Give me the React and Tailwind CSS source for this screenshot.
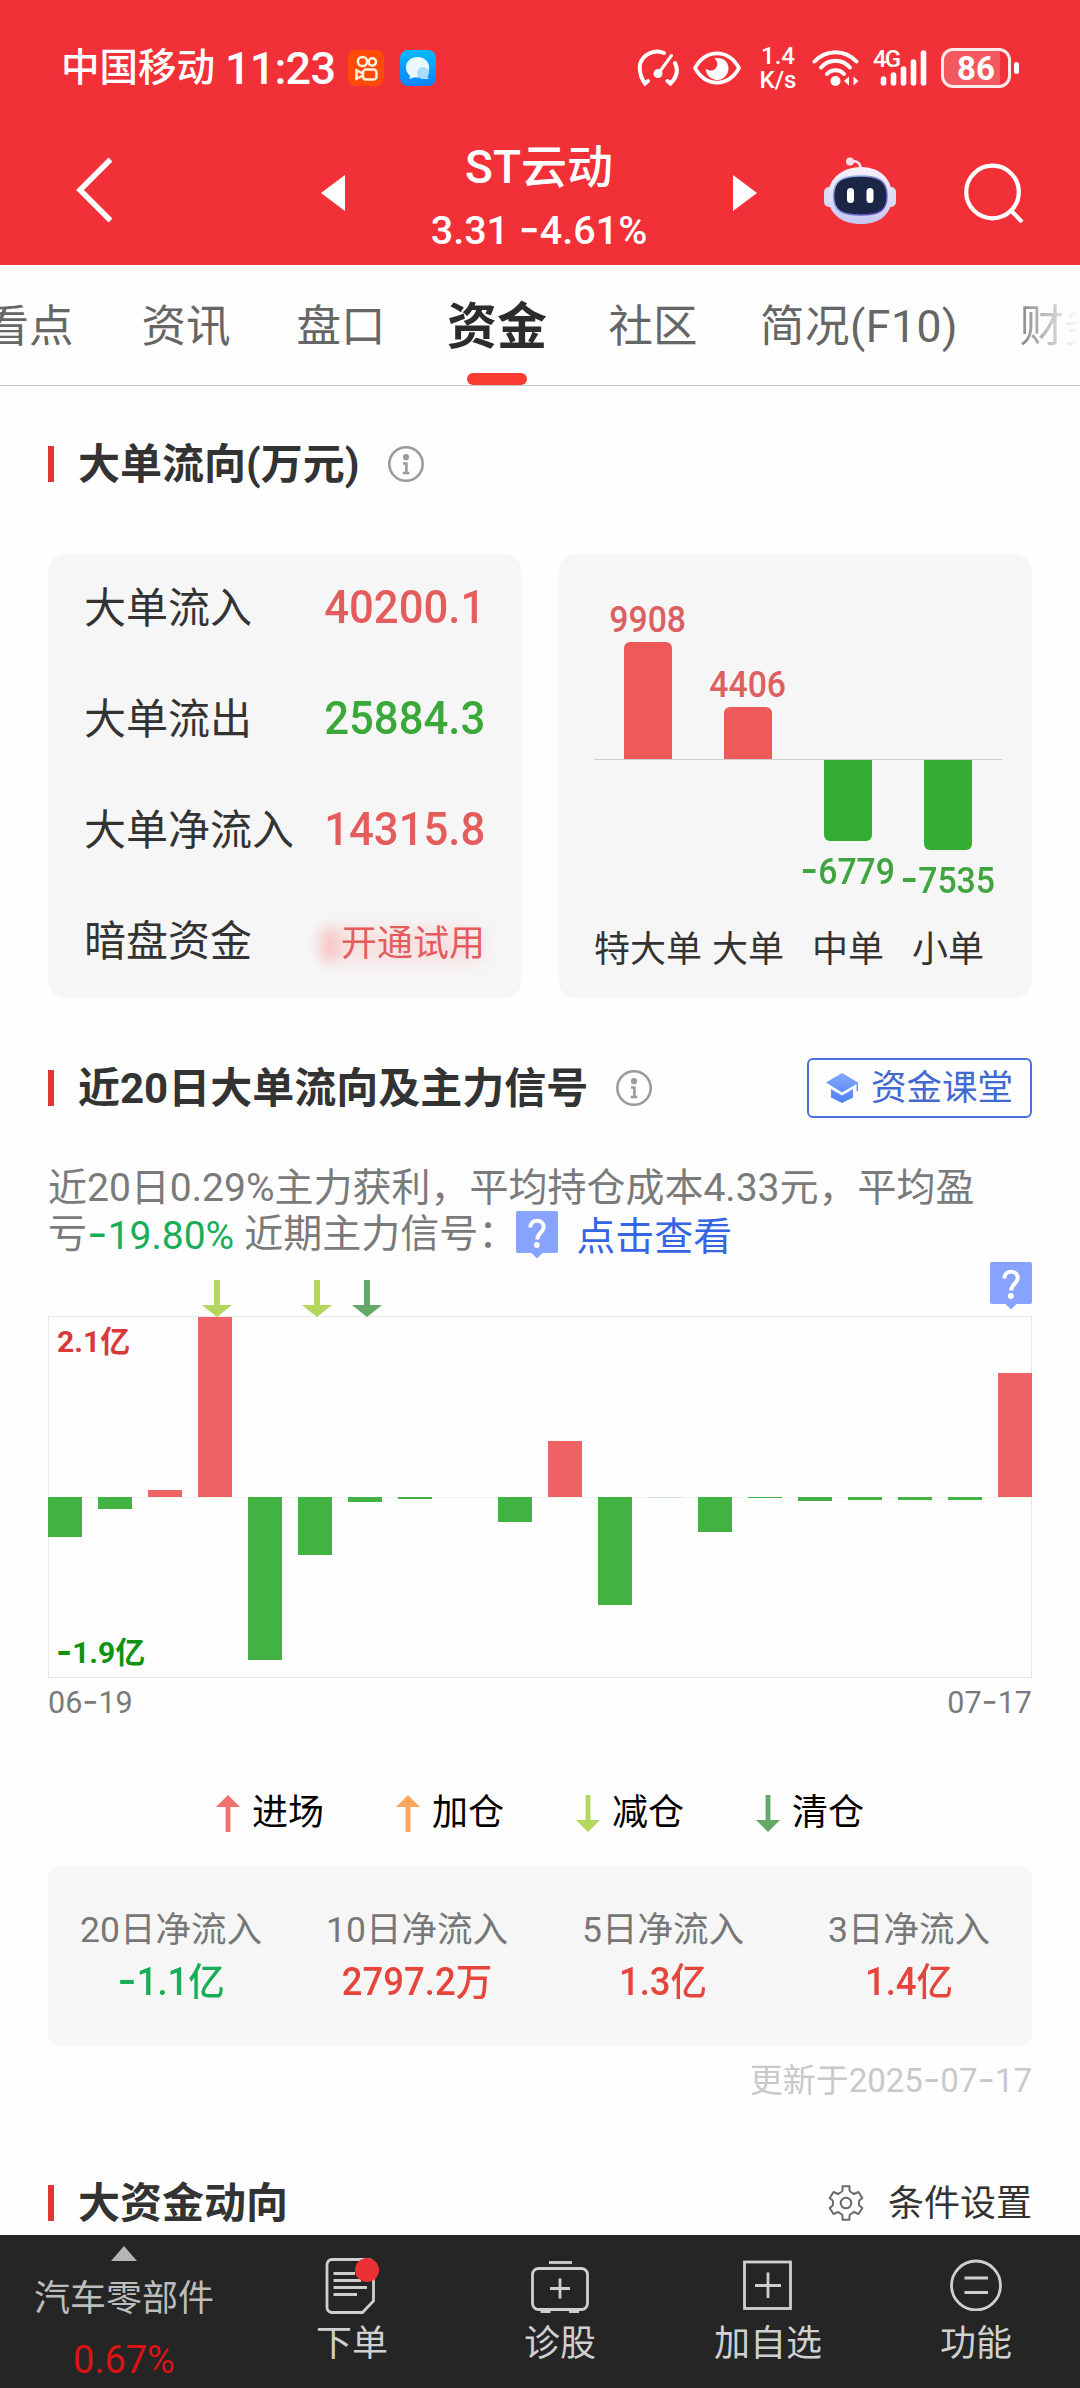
import React from "react";
import clsx from "clsx";

const tabs = [
  { label: "看点", className: "w-[158px]" },
  { label: "资讯", className: "w-[156px]" },
  { label: "盘口", className: "w-[154px]" },
  { label: "资金", className: "w-[158px]", active: true },
  { label: "社区", className: "w-[154px]" },
  { label: "简况(F10)", className: "w-[258px] tracking-[0.5px]" },
  { label: "财务", className: "w-[152px]", faded: true },
];

const flowRows = [
  { label: "大单流入", value: "40200.1", color: "text-[#e55c5c]" },
  { label: "大单流出", value: "25884.3", color: "text-[#3aa93a]" },
  { label: "大单净流入", value: "14315.8", color: "text-[#e55c5c]" },
];

const orderBars = [
  { label: "特大单", value: "9908", height: 117 },
  { label: "大单", value: "4406", height: 52 },
  { label: "中单", value: "-6779", height: 81 },
  { label: "小单", value: "-7535", height: 90 },
];

// bar heights in px, positive above the zero line
const dailyFlow = [
  -40, -12, 7, 180, -163, -58, -5, -2, 0, -25, 56, -108, -0.3, -35, -1, -4, -3,
  -3, -3, 124,
];

const legend = [
  { label: "进场", color: "#f0716e", up: true },
  { label: "加仓", color: "#f9a75f", up: true },
  { label: "减仓", color: "#b2d65e" },
  { label: "清仓", color: "#64a867" },
];

const netInflow = [
  { label: "20日净流入", value: "-1.1亿", color: "text-[#19ad58]" },
  { label: "10日净流入", value: "2797.2万", color: "text-[#e5453b]" },
  { label: "5日净流入", value: "1.3亿", color: "text-[#e5453b]" },
  { label: "3日净流入", value: "1.4亿", color: "text-[#e5453b]" },
];

// digits with a wide dash
const Num = ({ children }) =>
  children.split(/(-)/).map((part, i) =>
    part === "-" ? (
      <span key={i} className="font-['Inter'] text-[1.15em] leading-none tracking-normal">
        -
      </span>
    ) : (
      part
    )
  );

const InfoIcon = () => (
  <svg viewBox="0 0 36 36" className="w-9 h-9" fill="none">
    <circle cx="18" cy="18" r="16.7" stroke="#9b9b9b" strokeWidth="2.6" />
    <circle cx="18" cy="11.2" r="3.1" fill="#9b9b9b" />
    <path
      d="M15 17.5h3.4V27M14.8 27h6.6"
      stroke="#9b9b9b"
      strokeWidth="2.6"
    />
  </svg>
);

const SignalArrow = ({ color, up, className }) => (
  <svg
    viewBox="0 0 30 37"
    className={className}
    preserveAspectRatio="none"
    fill={color}
  >
    <path
      d={
        up
          ? "M15 0 30 12H18V37H12V12H0Z"
          : "M12 0h6v25h12L15 37 0 25h12Z"
      }
    />
  </svg>
);

const QuestionBadge = () => (
  <svg viewBox="0 0 42 47" className="w-[42px] h-[47px]" fill="none">
    <path
      d="M2 0H40a2 2 0 0 1 2 2V40a2 2 0 0 1-2 2H26.500l-5.500 5.500L15.500 42H2a2 2 0 0 1-2-2V2a2 2 0 0 1 2-2Z"
      fill="#87a3fd"
    />
    <path
      d="M14.300 16.500c0-4 2.800-6.700 6.700-6.700s6.700 2.600 6.700 6.200c0 5-6.500 6.600-6.500 12.500"
      stroke="#fff"
      strokeWidth="4"
    />
    <circle cx="20.800" cy="34" r="2.900" fill="#fff" />
  </svg>
);

const SectionTitle = ({ children }) => (
  <div className="flex items-center">
    <div className="w-[6px] h-9 bg-[#e03535]" />
    <h2 className="ml-6 pt-[2px] text-[42px] leading-[60px] font-bold text-[#333] whitespace-nowrap">
      {children}
    </h2>
  </div>
);

const StatusBar = () => (
  <div className="flex items-center h-[136px] pl-[61px] text-white">
    <span className="text-[38.500px] leading-none font-medium w-[154px] whitespace-nowrap">
      中国移动
    </span>
    <span className="ml-[10px] w-[113px] text-[45px] leading-none font-medium tracking-[-0.8px] whitespace-nowrap">
      11:23
    </span>
    <svg viewBox="0 0 36 36" className="ml-[10px] w-9 h-9" fill="none">
      <rect width="36" height="36" rx="8" fill="#ff4a0a" />
      <g stroke="#fff3dc" strokeWidth="2.500">
        <circle cx="14.500" cy="11.500" r="4.600" />
        <circle cx="24.300" cy="12" r="3.700" />
        <rect x="15" y="19.500" width="13.500" height="10" rx="3" />
        <path d="M15 23.500 8.500 20.200v8.600L15 25.500" />
      </g>
    </svg>
    <svg viewBox="0 0 36 36" className="ml-4 w-9 h-9" fill="none">
      <defs>
        <linearGradient id="chat" x1="0" y1="0" x2="0" y2="1">
          <stop stopColor="#08b9ff" />
          <stop offset="1" stopColor="#0b84ff" />
        </linearGradient>
      </defs>
      <rect width="36" height="36" rx="8" fill="url(#chat)" />
      <path
        d="M17.500 7C11 7 6 11.500 6 17.500c0 3.500 1.500 6 4 8L9.500 29l5-1.800c8.500 1.600 14.700-3.200 14.700-9.700C29.200 11.500 24 7 17.500 7Z"
        fill="#eaf8ff"
      />
      <path
        d="M28.500 20.500a6 6 0 1 0-5 8.500h5.300l-1.300-2.600c1.500-1.500 1.800-3.900 1-5.900Z"
        fill="#a9dcff"
      />
    </svg>

    <svg
      viewBox="0 0 42 38"
      className="ml-[201px] w-[42px] h-[38px]"
      fill="none"
      stroke="#fff"
      strokeWidth="4"
      strokeLinecap="round"
    >
      <path d="M27 4A18 18 0 0 0 3 15c-1 8 1 14 5 19.500l3-2.500" />
      <path d="M38 14c4 8 1 15-4.500 20.500l-3-2.500" />
      <path d="M21 25 34.500 6.500" strokeWidth="3" />
      <circle cx="21" cy="24.500" r="2.500" fill="#fff" />
    </svg>
    <svg viewBox="0 0 48 34" className="ml-[14px] w-12 h-[34px]" fill="none">
      <path
        d="M2 17C13-2.500 35-2.500 46 17 35 36.500 13 36.500 2 17Z"
        stroke="#fff"
        strokeWidth="3.600"
      />
      <path
        d="M24 7c8 0 11.500 5 11.500 10.500S31 29 24.500 29 13 24 12.500 17.500c3 2.500 7.500 3 10 0S25.500 10 21 7.500Z"
        fill="#fff"
      />
    </svg>
    <div className="ml-[18px] w-[38px] text-center text-[24px] leading-6 font-medium">
      <div>1.4</div>
      <div>K/s</div>
    </div>
    <svg viewBox="0 0 48 38" className="ml-[15px] w-12 h-[38px]" fill="none">
      <g stroke="#fff" strokeWidth="4" strokeLinecap="round">
        <path d="M2.500 12.500C14 0 33 0 44.500 12.500" />
        <path d="M9 18.500c8-9 21-9 29 0" />
        <path d="M15 25c4.500-5 12.500-5 17 0" />
      </g>
      <circle cx="23.500" cy="32" r="5" fill="#fff" />
      <path d="M32 32l5-4.500v9ZM46.500 32 41.500 27.500v9Z" fill="#fff" />
    </svg>
    <div className="relative ml-[13px] w-[55px] h-[38px]">
      <span className="absolute left-0 -top-[1px] text-[24px] leading-[23px] font-medium tracking-[-2px]">
        4G
      </span>
      <svg
        viewBox="0 0 55 38"
        className="w-full h-full"
        stroke="#fff"
        strokeWidth="5.600"
        strokeLinecap="round"
      >
        <path d="M10.500 30v4M20.500 26v8M30.500 20v14M40.500 13v21M50.500 4v30" />
      </svg>
    </div>
    <div className="ml-[13px] flex items-center">
      <div className="flex w-[70px] h-10 border-[3px] border-white/90 rounded-[12px] overflow-hidden">
        <div className="flex w-[56px] justify-center items-center bg-white/20 pl-2 text-[33px] leading-none font-bold">
          86
        </div>
      </div>
      <div className="ml-[3px] w-[5px] h-3 rounded-full bg-white" />
    </div>
  </div>
);

const StockHeader = () => (
  <div className="flex items-start h-[129px] pl-[76px] text-white">
    <svg
      viewBox="0 0 37 66"
      className="mt-[21px] w-[37px] h-[66px]"
      fill="none"
      stroke="#fff"
      strokeWidth="5.500"
    >
      <path d="M34.500 2.500 4 33 34.500 63.500" />
    </svg>
    <svg viewBox="0 0 24 36" className="ml-[208px] mt-[39px] w-6 h-9" fill="#fff">
      <path d="M24 0v36L0 18Z" />
    </svg>
    <div className="mt-[1px] w-[388px] text-center whitespace-nowrap">
      <div className="text-[46px] leading-[60px] font-medium">ST云动</div>
      <div className="mt-[4px] text-[39.500px] leading-[60px] font-medium">
        <Num>3.31 -4.61%</Num>
      </div>
    </div>
    <svg viewBox="0 0 24 36" className="mt-[39px] w-6 h-9" fill="#fff">
      <path d="M0 0v36L24 18Z" />
    </svg>
    <svg
      viewBox="0 0 72 68"
      className="ml-[67px] mt-[21px] w-[72px] h-[68px]"
      fill="none"
    >
      <defs>
        <linearGradient id="head" x1="0" y1="0" x2="0" y2="1">
          <stop stopColor="#f6f1fb" />
          <stop offset="0.6" stopColor="#dcdcf7" />
          <stop offset="1" stopColor="#c3c6f0" />
        </linearGradient>
        <linearGradient id="rim" x1="0" y1="0" x2="1" y2="1">
          <stop stopColor="#9fc8f5" />
          <stop offset="1" stopColor="#5a3fc0" />
        </linearGradient>
      </defs>
      <path
        d="M26 5c6-2 10 0 11 7"
        stroke="#f3e6f2"
        strokeWidth="2.500"
      />
      <circle cx="26" cy="4.500" r="4" fill="#f6dfe8" />
      <rect x="0" y="30" width="11" height="20" rx="5" fill="#d9dcf6" />
      <rect x="61" y="30" width="11" height="20" rx="5" fill="#d9dcf6" />
      <path
        d="M37 10c18 0 31 11 31 29S56 67 37 67 4 57 4 39s15-29 33-29Z"
        fill="url(#head)"
      />
      <path
        d="M36.500 19c17 0 26.500 4 26.500 19.500S55 58 36.500 58 9.500 54 9.500 38.500 19 19 36.500 19Z"
        fill="#1b2546"
        stroke="url(#rim)"
        strokeWidth="1.500"
      />
      <rect x="23" y="31" width="7" height="15" rx="3.500" fill="#fff" />
      <rect x="42.500" y="31" width="7" height="15" rx="3.500" fill="#fff" />
    </svg>
    <svg
      viewBox="0 0 60 60"
      className="ml-[68px] mt-[27px] w-[60px] h-[60px]"
      fill="none"
      stroke="#fff"
      strokeWidth="4.200"
    >
      <circle cx="28.500" cy="29" r="26.300" />
      <path d="M47.500 48 58 59" />
    </svg>
  </div>
);

const TabBar = () => (
  <div className="h-[121px] border-b border-[#c4c6c5] overflow-hidden">
    <div className="flex -ml-[50px] w-[1190px] h-[120px]">
      {tabs.map((tab) => (
        <div
          key={tab.label}
          className={clsx(
            "relative flex-none text-center leading-[124px] whitespace-nowrap",
            tab.className,
            tab.active
              ? "text-[50px] font-bold text-[#2c2c2c]"
              : "text-[44.500px] text-[#666]",
            tab.faded &&
              "bg-linear-to-r from-[#888] from-20% to-white to-60% bg-clip-text text-transparent"
          )}
        >
          {tab.label}
          {tab.active && (
            <div className="absolute bottom-0 left-[49px] w-[60px] h-3 rounded-full bg-[#f93b32]" />
          )}
        </div>
      ))}
    </div>
  </div>
);

const OrderFlow = () => (
  <div className="mt-[42px] flex gap-9">
    <div className="w-[474px] h-[444px] rounded-[18px] bg-[#f6f6f6] pl-[36px] pr-[37px]">
      {flowRows.map((row) => (
        <div
          key={row.label}
          className="flex justify-between h-[111px] whitespace-nowrap"
        >
          <span className="text-[42px] leading-[109px] text-[#333]">
            {row.label}
          </span>
          <span
            className={clsx(
              "text-[47px] leading-[106px] font-medium origin-right scale-x-[.93]",
              row.color
            )}
          >
            {row.value}
          </span>
        </div>
      ))}
      <div className="flex justify-between h-[111px] whitespace-nowrap">
        <span className="text-[42px] leading-[109px] text-[#333]">
          暗盘资金
        </span>
        <span className="relative text-[36px] leading-[115px] text-[#e55c5c]">
          <span className="absolute -left-[16px] top-[40px] w-[160px] h-9 rounded-full bg-[#ff6b6b]/15 blur-[9px]" />
          <span className="absolute -left-[22px] top-[40px] w-5 h-9 rounded-full bg-[#ff6b6b]/25 blur-[6px]" />
          <span className="relative">开通试用</span>
        </span>
      </div>
    </div>

    <div className="w-[474px] h-[444px] rounded-[18px] bg-[#f6f6f6] pl-[36px] pr-[30px]">
      <div className="flex h-[206px] pl-1 border-b border-[#cfcfcf]">
        {orderBars.map((bar) => (
          <div
            key={bar.label}
            className="flex flex-col justify-end items-center w-[100px]"
          >
            {!bar.value.startsWith("-") && (
              <>
                <div className="text-[37.500px] leading-[44px] font-medium text-[#dd6060] scale-x-[.9] -translate-y-px">
                  {bar.value}
                </div>
                <div
                  className="w-12 rounded-t-[6px] bg-[#ee5959]"
                  style={{ height: bar.height }}
                />
              </>
            )}
          </div>
        ))}
      </div>
      <div className="flex h-[148px] pl-1">
        {orderBars.map((bar) => (
          <div key={bar.label} className="flex flex-col items-center w-[100px]">
            {bar.value.startsWith("-") && (
              <>
                <div
                  className="w-12 rounded-b-[6px] bg-[#34ad34]"
                  style={{ height: bar.height }}
                />
                <div className="mt-[6px] text-[37.500px] leading-[44px] font-medium text-[#40a540] scale-x-[.9] whitespace-nowrap">
                  <Num>{bar.value}</Num>
                </div>
              </>
            )}
          </div>
        ))}
      </div>
      <div className="flex pl-1">
        {orderBars.map((bar) => (
          <div
            key={bar.label}
            className="flex justify-center w-[100px] text-[36px] leading-[84px] text-[#333] whitespace-nowrap"
          >
            {bar.label}
          </div>
        ))}
      </div>
    </div>
  </div>
);

const DailyChart = () => (
  <div className="relative h-[362px] border border-[#e8e8e8]">
    <div className="absolute -left-px -right-px top-[180px] h-px bg-[#f3f3f3]" />
    <div className="absolute -left-px -right-px top-0 flex justify-between">
      {dailyFlow.map((v, i) => (
        <div key={i} className="flex flex-col w-[33.500px] h-[360px]">
          <div className="flex items-end h-[180px]">
            {v > 0 && (
              <div className="w-full bg-[#ef6367]" style={{ height: v }} />
            )}
          </div>
          {v < 0 && (
            <div
              className={clsx("w-full bg-[#42b342]", v > -1 && "opacity-20")}
              style={{ height: -v }}
            />
          )}
        </div>
      ))}
    </div>
    <span className="absolute left-2 top-[5px] text-[30px] leading-10 font-bold text-[#d83a3a]">
      2.1亿
    </span>
    <span className="absolute left-[7px] bottom-[4px] text-[30px] leading-10 font-bold text-[#109310]">
      <Num>-1.9亿</Num>
    </span>
    <SignalArrow
      color="#b2d65e"
      className="absolute left-[153px] -top-[37px] w-[30px] h-[37px]"
    />
    <SignalArrow
      color="#b2d65e"
      className="absolute left-[253px] -top-[37px] w-[30px] h-[37px]"
    />
    <SignalArrow
      color="#64a867"
      className="absolute left-[303px] -top-[37px] w-[30px] h-[37px]"
    />
    <div className="absolute -right-px -top-[55px]">
      <QuestionBadge />
    </div>
  </div>
);

const BottomBar = () => (
  <div className="flex h-[153px] bg-[#252525] text-[36px] text-[#d0d0d0] text-center whitespace-nowrap">
    <div className="flex flex-col items-center w-[248px]">
      <svg viewBox="0 0 26 15" className="mt-[11px] w-[26px] h-[15px]" fill="#b5b5b5">
        <path d="M13 0 26 15H0Z" />
      </svg>
      <div className="mt-[12px] leading-[52px] text-[#bdbdbd]">汽车零部件</div>
      <div className="mt-[10px] text-[38px] leading-[50px] text-[#d91414]">
        0.67%
      </div>
    </div>
    <div className="flex flex-col items-center w-52">
      <svg
        viewBox="0 0 54 56"
        className="mt-[23px] w-[54px] h-14"
        fill="none"
        stroke="#cfcfcf"
        strokeWidth="2.800"
      >
        <path d="M7 1.500H43.500a5 5 0 0 1 5 5V43L37.500 54.500H7a5 5 0 0 1-5-5V6.500a5 5 0 0 1 5-5Z" />
        <path d="M8.500 15.500H30M8.500 22.500H36M8.500 29.500H42M8.500 36.500H32" />
        <circle cx="42" cy="12" r="12" fill="#ea3035" stroke="none" />
      </svg>
      <div className="mt-[4px] leading-[52px]">下单</div>
    </div>
    <div className="flex flex-col items-center w-52">
      <svg
        viewBox="0 0 58 54"
        className="mt-[25px] w-[58px] h-[54px]"
        fill="none"
        stroke="#cfcfcf"
        strokeWidth="2.800"
      >
        <path d="M18 2.500H41" />
        <rect x="1.500" y="8.500" width="55" height="41" rx="6" />
        <path d="M19 28.500H39M29 18.500v20" />
        <path d="M9.500 51.200h10M38 51.200H48" strokeWidth="3.500" />
      </svg>
      <div className="mt-[4px] leading-[52px]">诊股</div>
    </div>
    <div className="flex flex-col items-center w-52">
      <svg
        viewBox="0 0 50 50"
        className="mt-[25px] w-[50px] h-[50px]"
        fill="none"
        stroke="#cfcfcf"
        strokeWidth="2.800"
      >
        <rect x="1.500" y="2" width="46" height="46.500" />
        <path d="M12 25.500H38M25 12.500V38" />
      </svg>
      <div className="mt-[8px] leading-[52px]">加自选</div>
    </div>
    <div className="flex flex-col items-center w-52">
      <svg
        viewBox="0 0 52 52"
        className="mt-6 w-[52px] h-[52px]"
        fill="none"
        stroke="#cfcfcf"
        strokeWidth="2.800"
      >
        <circle cx="26" cy="26.500" r="24.500" />
        <path d="M14.500 19H38M14.500 33.500H38" />
      </svg>
      <div className="mt-[7px] leading-[52px]">功能</div>
    </div>
  </div>
);

const App = () => {
  return (
    <div className="flex flex-col w-[1080px] h-[2388px] overflow-hidden bg-[#fefefe] font-[Roboto,'Noto_Sans_CJK_SC',sans-serif]">
      <div className="flex-none bg-[#f13037]">
        <StatusBar />
        <StockHeader />
      </div>
      <TabBar />

      <main className="flex-1 min-h-0 px-12 pt-12 overflow-hidden">
        <div className="flex items-center h-[60px]">
          <SectionTitle>大单流向(万元)</SectionTitle>
          <div className="ml-[29px]">
            <InfoIcon />
          </div>
        </div>
        <div className="h-[18px]" />
        <OrderFlow />

        <div className="mt-[60px] flex items-center h-[60px]">
          <SectionTitle>近20日大单流向及主力信号</SectionTitle>
          <div className="ml-[28px]">
            <InfoIcon />
          </div>
          <div className="ml-auto flex items-center w-[225px] h-[60px] pl-4 rounded-[6px] border-2 border-[#4a70dc] text-[#4169d0]">
            <svg viewBox="0 0 34 32" className="w-[34px] h-8" fill="none">
              <defs>
                <linearGradient id="cap" x1="0" y1="0" x2="0" y2="1">
                  <stop stopColor="#86a8f8" />
                  <stop offset="1" stopColor="#4f7ff5" />
                </linearGradient>
              </defs>
              <path
                d="M17 1 33 10.500V19H31.500V12L17 20.500 1 10.500ZM6 17l11 6.500L28 17v8.500L17 31 6 25.500Z"
                fill="url(#cap)"
              />
            </svg>
            <span className="ml-3 text-[35.500px] leading-[58px] whitespace-nowrap">
              资金课堂
            </span>
          </div>
        </div>

        <div className="mt-[47px] text-[39px] leading-[46px] text-[#7a7a7a] whitespace-nowrap">
          <div>近20日0.29%主力获利，平均持仓成本4.33元，平均盈</div>
          <div className="flex items-start h-[46px]">
            <span>亏</span>
            <span className="text-[#19ad58]">
              <Num>-19.80%</Num>
            </span>
            <span className="ml-[10px] w-[272px]">近期主力信号：</span>
            <QuestionBadge />
            <span className="ml-[18px] pt-[3px] text-[#3465e4]">点击查看</span>
          </div>
        </div>

        <div className="h-[59px]" />
        <DailyChart />
        <div className="flex justify-between text-[30.500px] leading-[50px] text-[#7a7a7a]">
          <span>
            <Num>06-19</Num>
          </span>
          <span>
            <Num>07-17</Num>
          </span>
        </div>

        <div className="mt-[60px] flex h-[50px] pl-[168px]">
          {legend.map((item) => (
            <div key={item.label} className="flex items-center w-[180px]">
              <SignalArrow
                color={item.color}
                up={item.up}
                className="w-6 h-[37px]"
              />
              <span className="ml-[12px] text-[36px] leading-[50px] text-black">
                {item.label}
              </span>
            </div>
          ))}
        </div>

        <div className="mt-[28px] grid grid-cols-4 h-[180px] pt-[38px] rounded-[12px] bg-[#f6f6f6] text-center whitespace-nowrap">
          {netInflow.map((item) => (
            <div key={item.label}>
              <div className="text-[35.500px] leading-[52px] text-[#777]">
                {item.label}
              </div>
              <div
                className={clsx(
                  "text-[38px] leading-[52px] font-medium scale-x-[.96]",
                  item.color
                )}
              >
                <Num>{item.value}</Num>
              </div>
            </div>
          ))}
        </div>
        <div className="mt-[10px] text-right text-[33px] leading-[50px] text-[#c9c9c9]">
          <Num>更新于2025-07-17</Num>
        </div>

        <div className="mt-[67px] flex items-center justify-between h-[60px]">
          <SectionTitle>大资金动向</SectionTitle>
          <div className="flex items-center">
            <svg
              viewBox="0 0 36 36"
              className="w-9 h-9"
              fill="none"
              stroke="#6a6a6a"
              strokeWidth="2"
            >
              <path d="M14.500 1.200h7v4q0 1.500 3 3l1.500.8 4.500-2 3.800 6-3 2.500q-.8 2.500 0 5l3 2.500-3.800 6-4.500-2-1.500.8q-3 1.500-3 3v4h-7v-4q0-1.500-3-3l-1.500-.8-4.500 2-3.800-6 3-2.500q.8-2.500 0-5l-3-2.500 3.800-6 4.500 2 1.500-.8q3-1.500 3-3Z" strokeLinejoin="round" />
              <circle cx="18" cy="18" r="5.300" />
            </svg>
            <span className="ml-6 text-[36px] leading-[60px] pt-[2px] text-[#333]">
              条件设置
            </span>
          </div>
        </div>
      </main>

      <BottomBar />
    </div>
  );
};

export default App;
